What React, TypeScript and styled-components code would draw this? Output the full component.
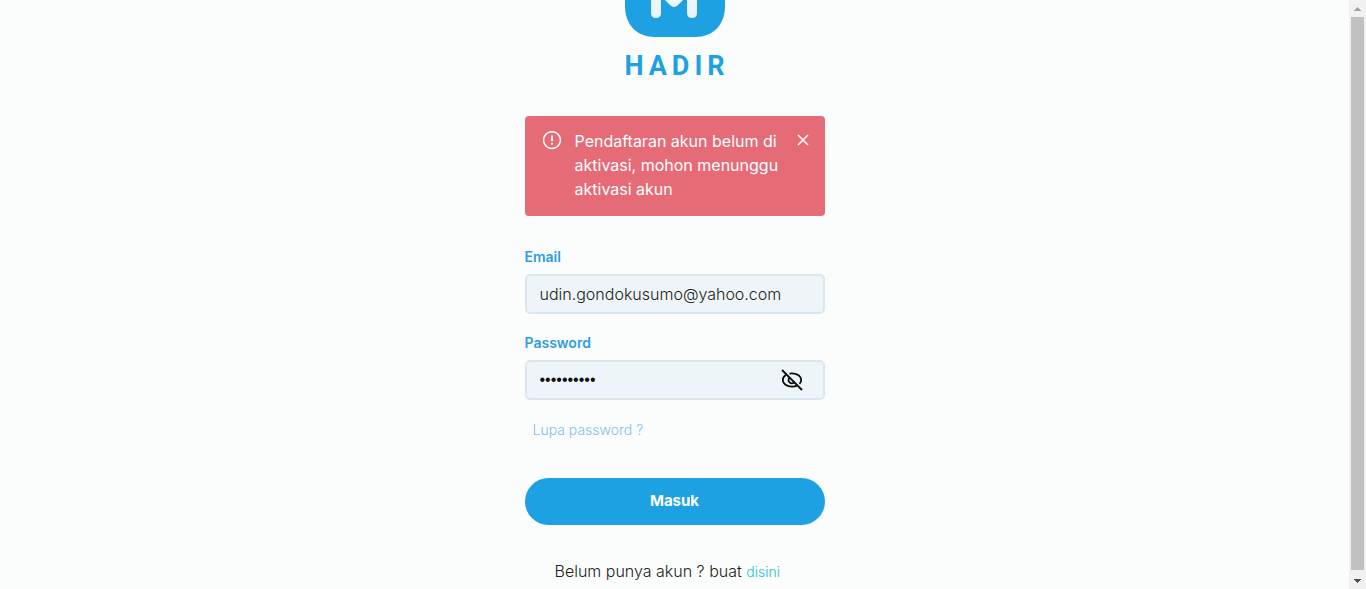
import React, { useState } from "react";
import styled, { createGlobalStyle } from "styled-components";

const GlobalStyle = createGlobalStyle`
  *, *::before, *::after { box-sizing: border-box; }
  body {
    margin: 0;
    background: #fbfdfc;
    color: #222222;
    font-family: Inter, "Open Sans", sans-serif;
    font-size: 16px;
    line-height: 24px;
  }
`;

const Screen = styled.div`
  display: flex;
  height: 100vh;
  overflow: hidden;
`;

const Main = styled.main`
  flex: 1;
  display: flex;
  flex-direction: column;
  align-items: center;
`;

const LogoMark = styled.div`
  display: flex;
  align-items: flex-end;
  justify-content: center;
  flex: none;
  height: 37px;
  overflow: hidden;

  svg { flex: none; }
`;

const Wordmark = styled.h1`
  margin: 13px 0 34px 5px;
  color: #1da1e2;
  font-family: Roboto, sans-serif;
  font-size: 27px;
  font-weight: 700;
  line-height: 32px;
  letter-spacing: 5px;
`;

const Form = styled.form`
  display: flex;
  flex-direction: column;
  width: 300px;
`;

const Alert = styled.div`
  display: flex;
  align-items: flex-start;
  gap: 12px;
  padding: 13px 16px;
  border-radius: 4px;
  background: #e56b77;
  color: #ffffff;
  min-height: 100px;
  margin-bottom: 32px;

  p { flex: 1; margin: 0; font-weight: 400; }
  svg { display: block; flex: none; margin-top: 1px; }
`;

const CloseButton = styled.button`
  padding: 4px 0 0;
  border: 0;
  background: none;
  color: inherit;
  cursor: pointer;
`;

const Field = styled.div`
  display: flex;
  flex-direction: column;
  gap: 8px;
  margin-bottom: 20px;
`;

const Label = styled.label`
  color: #2d9de0;
  font-size: 14px;
  font-weight: 600;
  line-height: 18px;
`;

const InputBox = styled.div`
  display: flex;
  align-items: center;
  height: 40px;
  padding: 0 20px 0 13px;
  border: 2px solid #dbe7f0;
  border-radius: 5px;
  background: #eef5f9;
`;

const Input = styled.input`
  flex: 1;
  min-width: 0;
  padding: 0;
  border: 0;
  outline: 0;
  background: none;
  color: #222222;
  font: inherit;
  font-weight: 300;

  &[type="password"] {
    color: #111111;
    font-family: "Liberation Sans", sans-serif;
  }
`;

const EyeButton = styled.button`
  display: flex;
  padding: 0;
  border: 0;
  background: none;
  color: #0b0b0b;
  cursor: pointer;
`;

const ForgotLink = styled.a`
  align-self: flex-start;
  margin-left: 8px;
  color: #80c0ec;
  font-size: 14px;
  font-weight: 300;
  line-height: 20px;
  text-decoration: none;
`;

const Submit = styled.button`
  height: 47px;
  margin: 38px 0 34px;
  padding: 0 0 2px;
  border: 0;
  border-radius: 24px;
  background: #1da1e2;
  color: #ffffff;
  font: inherit;
  font-size: 15px;
  font-weight: 700;
  cursor: pointer;
`;

const SignUp = styled.p`
  margin: 0 0 0 30px;
  font-weight: 300;
  white-space: nowrap;

  a {
    color: #20c0da;
    font-size: 14px;
    text-decoration: none;
  }
`;

const ScrollRail = styled.div`
  display: flex;
  flex-direction: column;
  align-items: center;
  width: 17px;
  background: #f1f1f1;
`;

const ScrollArrow = styled.div<{ $color: string }>`
  display: flex;
  align-items: center;
  justify-content: center;
  height: 17px;
  color: ${(p) => p.$color};
`;

const ScrollThumb = styled.div`
  flex: 1;
  width: 13px;
  margin-bottom: 2px;
  background: #c1c1c1;
`;

export default function App() {
  const [visible, setVisible] = useState(false);
  const [alertOpen, setAlertOpen] = useState(true);

  return (
    <>
      <GlobalStyle />
      <Screen>
        <Main>
          <LogoMark>
            <svg width="100" height="100" viewBox="0 0 100 100" aria-hidden="true">
              <defs>
                <linearGradient id="mark" x1="0" y1="0" x2="0" y2="1">
                  <stop offset="0" stopColor="#ffffff" />
                  <stop offset="1" stopColor="#e6f4fc" />
                </linearGradient>
              </defs>
              <path d="M30 0H70Q100 0 100 30V69C100 88 88 100 70 100H30C12 100 0 88 0 69V30Q0 0 30 0Z" fill="#1da1e2" />
              <path d="M26 30Q26 22 34 22Q37 22 40 25L49 36L58 25Q61 22 64 22Q72 22 72 30V76Q72 81 67 81Q62 81 62 76V59L53 68Q49 72 45 68L36 59V76Q36 81 31 81Q26 81 26 76Z" fill="url(#mark)" />
            </svg>
          </LogoMark>
          <Wordmark>HADIR</Wordmark>

          <Form onSubmit={(e) => e.preventDefault()}>
            {alertOpen && (
              <Alert role="alert">
                <svg width="22" height="22" viewBox="0 0 24 24" fill="currentColor" aria-hidden="true">
                  <path d="M11 14h2v2h-2zm0-8h2v6h-2zm.99-5C6.470 1 2 5.480 2 11s4.470 10 9.990 10C17.520 21 22 16.520 22 11S17.520 1 11.990 1zM12 19.400c-4.600 0-8.400-3.780-8.400-8.400s3.780-8.400 8.400-8.400 8.400 3.780 8.400 8.400-3.780 8.400-8.400 8.400z" />
                </svg>
                <p>Pendaftaran akun belum di aktivasi, mohon menunggu aktivasi akun</p>
                <CloseButton type="button" aria-label="Tutup" onClick={() => setAlertOpen(false)}>
                  <svg width="12" height="12" viewBox="0 0 12 12" stroke="currentColor" strokeWidth="1.5" aria-hidden="true">
                    <path d="M1 1L11 11M11 1L1 11" />
                  </svg>
                </CloseButton>
              </Alert>
            )}

            <Field>
              <Label htmlFor="email">Email</Label>
              <InputBox>
                <Input id="email" type="email" defaultValue="udin.gondokusumo@yahoo.com" />
              </InputBox>
            </Field>

            <Field>
              <Label htmlFor="password">Password</Label>
              <InputBox>
                <Input id="password" type={visible ? "text" : "password"} defaultValue="rahasia123" />
                <EyeButton type="button" aria-label="Tampilkan password" onClick={() => setVisible(!visible)}>
                  <svg width="22" height="22" viewBox="0 0 22 22" fill="none" stroke="currentColor" strokeWidth="1.8" aria-hidden="true">
                    <path d="M1 1L21 21" />
                    <path d="M4.800 6C2.900 7.300 1.800 9.100 1.800 11c0 3.700 4.100 6.700 9.200 6.700 2 0 3.900-.5 5.300-1.300" />
                    <path d="M8.500 4.600C9.300 4.400 10.100 4.300 11 4.300c5.100 0 9.200 3 9.200 6.700 0 1.500-.6 2.800-1.700 3.900" />
                    <path d="M8.600 8.500a3.400 3.400 0 1 0 4.900 4.700" />
                  </svg>
                </EyeButton>
              </InputBox>
            </Field>

            <ForgotLink href="#lupa">Lupa password ?</ForgotLink>
            <Submit type="submit">Masuk</Submit>
            <SignUp>
              Belum punya akun ? buat <a href="#daftar">disini</a>
            </SignUp>
          </Form>
        </Main>

        <ScrollRail aria-hidden="true">
          <ScrollArrow $color="#a3a3a3">
            <svg width="7" height="4" viewBox="0 0 7 4" fill="currentColor" shapeRendering="crispEdges">
              <path d="M3 0h1v1h1v1h1v1h1v1H0V3h1V2h1V1h1z" />
            </svg>
          </ScrollArrow>
          <ScrollThumb />
          <ScrollArrow $color="#505050">
            <svg width="7" height="4" viewBox="0 0 7 4" fill="currentColor" shapeRendering="crispEdges">
              <path d="M0 0h7v1H6v1H5v1H4v1H3V3H2V2H1V1H0z" />
            </svg>
          </ScrollArrow>
        </ScrollRail>
      </Screen>
    </>
  );
}
